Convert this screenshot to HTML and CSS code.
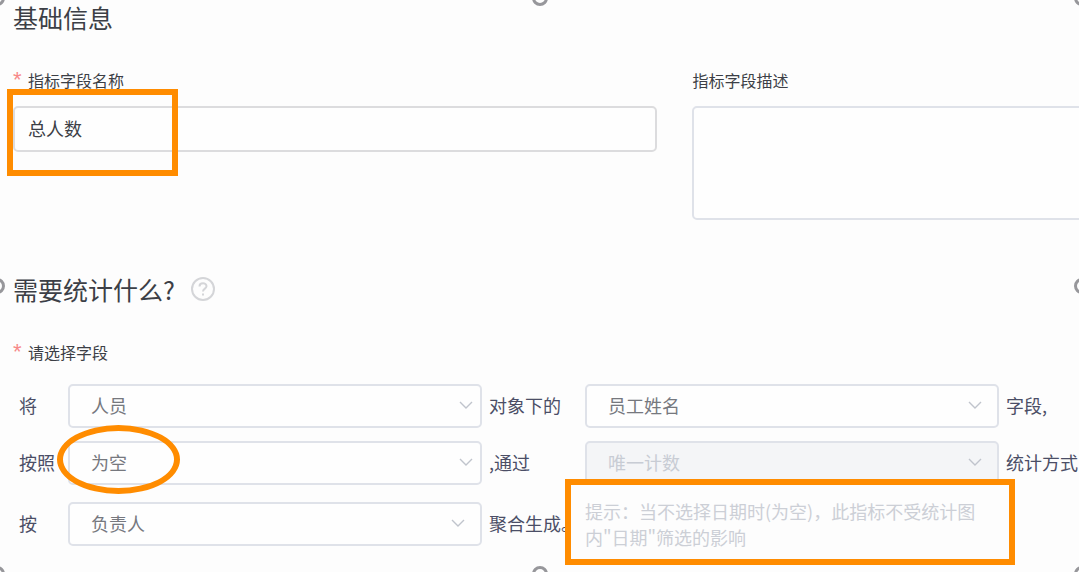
FILE: index.html
```html
<!DOCTYPE html>
<html lang="zh-CN">
<head>
  <meta charset="UTF-8">
  <meta name="viewport" content="width=device-width, initial-scale=1.0">
  <title>指标设置</title>
  <link rel="stylesheet" href="styles.css">
</head>
<body>
  <form class="page">
    <section class="basic">
      <h2>基础信息</h2>
      <div class="basic-grid">
        <div class="field">
          <label for="name"><span class="required">*</span>指标字段名称</label>
          <div class="control">
            <input type="text" id="name" value="总人数">
            <span class="mark mark-name"></span>
          </div>
        </div>
        <div class="field">
          <label for="desc">指标字段描述</label>
          <textarea id="desc"></textarea>
        </div>
      </div>
    </section>

    <section class="stat">
      <h2>需要统计什么?
        <svg class="help" viewBox="0 0 24 24" width="24" height="24">
          <circle cx="12" cy="12" r="11"/>
          <path d="M8.5 9.5C8.5 5.3 15.5 5.3 15.5 9.3C15.5 11.6 12 11.8 12 14.6M12 16.6V18.4"/>
        </svg>
      </h2>
      <div class="group-label"><span class="required">*</span>请选择字段</div>

      <div class="rows">
        <div class="row">
          <label for="object">将</label>
          <div class="control">
            <select id="object"><option>人员</option></select>
            <svg class="arrow" viewBox="0 0 14 8"><path d="M1 1l6 6 6-6"/></svg>
          </div>
          <label class="after" for="column">对象下的</label>
          <div class="control far">
            <select id="column"><option>员工姓名</option></select>
            <svg class="arrow" viewBox="0 0 14 8"><path d="M1 1l6 6 6-6"/></svg>
          </div>
          <span class="after">字段,</span>
        </div>

        <div class="row">
          <label for="date">按照</label>
          <div class="control">
            <select id="date"><option>为空</option></select>
            <svg class="arrow" viewBox="0 0 14 8"><path d="M1 1l6 6 6-6"/></svg>
            <span class="mark mark-date"></span>
          </div>
          <label class="after" for="method">,通过</label>
          <div class="control far">
            <select id="method" disabled><option>唯一计数</option></select>
            <svg class="arrow" viewBox="0 0 14 8"><path d="M1 1l6 6 6-6"/></svg>
          </div>
          <span class="after">统计方式</span>
        </div>

        <div class="row">
          <label for="owner">按</label>
          <div class="control far">
            <select id="owner"><option>负责人</option></select>
            <svg class="arrow" viewBox="0 0 14 8"><path d="M1 1l6 6 6-6"/></svg>
          </div>
          <span class="after">聚合生成。</span>
          <p class="hint">提示：当不选择日期时(为空)，此指标不受统计图内"日期"筛选的影响</p>
        </div>
      </div>
    </section>

    <!-- selection handles -->
    <i class="handle top left"></i>
    <i class="handle top center"></i>
    <i class="handle top right"></i>
    <i class="handle middle left"></i>
    <i class="handle middle right"></i>
    <i class="handle bottom left"></i>
    <i class="handle bottom center"></i>
    <i class="handle bottom right"></i>
  </form>
</body>
</html>
```
FILE: styles.css
```css
* { box-sizing: border-box; }
body {
  margin: 0;
  background: #fdfdfd;
  color: #3c3f46;
  font-family: "Noto Sans CJK SC", sans-serif;
}
.page {
  position: relative;
  min-height: 100vh;
  overflow: hidden;
}
h2 {
  display: flex;
  align-items: center;
  gap: 16px;
  margin: 0 0 34px;
  font-size: 25px;
  font-weight: 400;
  line-height: 34px;
}
input, select, textarea {
  display: block;
  width: 100%;
  margin: 0;
  border: 2px solid #dfe2e9;
  border-radius: 5px;
  background: #fefefe;
  color: inherit;
  font: inherit;
  font-size: 18px;
}
.basic, .stat { padding-left: 13px; }
.basic-grid {
  display: grid;
  grid-template-columns: 5fr 3fr;
  gap: 35px;
}
.field label, .group-label {
  display: flex;
  font-size: 16px;
  line-height: 24px;
}
.field label { margin-bottom: 14px; }
.required {
  width: 15px;
  color: #f78989;
  font-family: "Liberation Sans", sans-serif;
  font-size: 22px;
}
.control { position: relative; }
input {
  height: 46px;
  padding: 0 13px 3px;
  border-color: #dcdcde;
}
/* runs off the right edge */
textarea {
  width: calc(100% + 8px);
  height: 114px;
  resize: none;
}

.stat { margin-top: 52px; }
.help {
  fill: none;
  stroke: #d4d5d8;
  stroke-width: 2;
}
.group-label { margin-bottom: 20px; }
.rows {
  display: flex;
  flex-direction: column;
  gap: 13px;
  padding-left: 6px;
}
.row {
  display: grid;
  grid-template-columns: 49px 1fr 103px 1fr 80px;
  align-items: center;
  color: #4b4e66;
  font-size: 18px;
  line-height: 26px;
  white-space: nowrap;
}
.row > label, .row > span { padding-bottom: 3px; }
.row > .after { padding-left: 7px; }
select {
  height: 44px;
  padding: 0 21px 3px;
  appearance: none;
  color: #76787e;
}
select:disabled {
  background: #f4f5f7;
  color: #c8ccd4;
  opacity: 1;
}
.arrow {
  position: absolute;
  top: 17px;
  right: 9px;
  width: 14px;
  height: 8px;
  fill: none;
  stroke: #c0c4cc;
  stroke-width: 1.4;
  pointer-events: none;
}
.far .arrow { right: 17px; }
.hint {
  position: relative;
  z-index: 1;
  margin: 0;
  padding-right: 20px;
  color: #cccfd6;
  white-space: normal;
}

/* orange annotations */
.mark, .hint::before {
  position: absolute;
  border: 6px solid #ff8c00;
  pointer-events: none;
}
.mark-name {
  top: -17px;
  left: -6px;
  width: 171px;
  height: 87px;
}
.mark-date {
  top: -16px;
  left: -11px;
  width: 123px;
  height: 69px;
  border-radius: 50%;
}
.hint::before {
  content: "";
  inset: -19px -16px -15px -20px;
  z-index: -1;
  background: #fdfdfd;
}

.handle {
  position: absolute;
  width: 16px;
  height: 16px;
  border: 3px solid #97979b;
  border-radius: 50%;
}
.top { top: -10px; }
.middle { top: calc(50% - 8px); }
.bottom { bottom: -10px; }
.left { left: -11px; }
.center { left: calc(50% - 8px); }
.right { right: -11px; }
```
